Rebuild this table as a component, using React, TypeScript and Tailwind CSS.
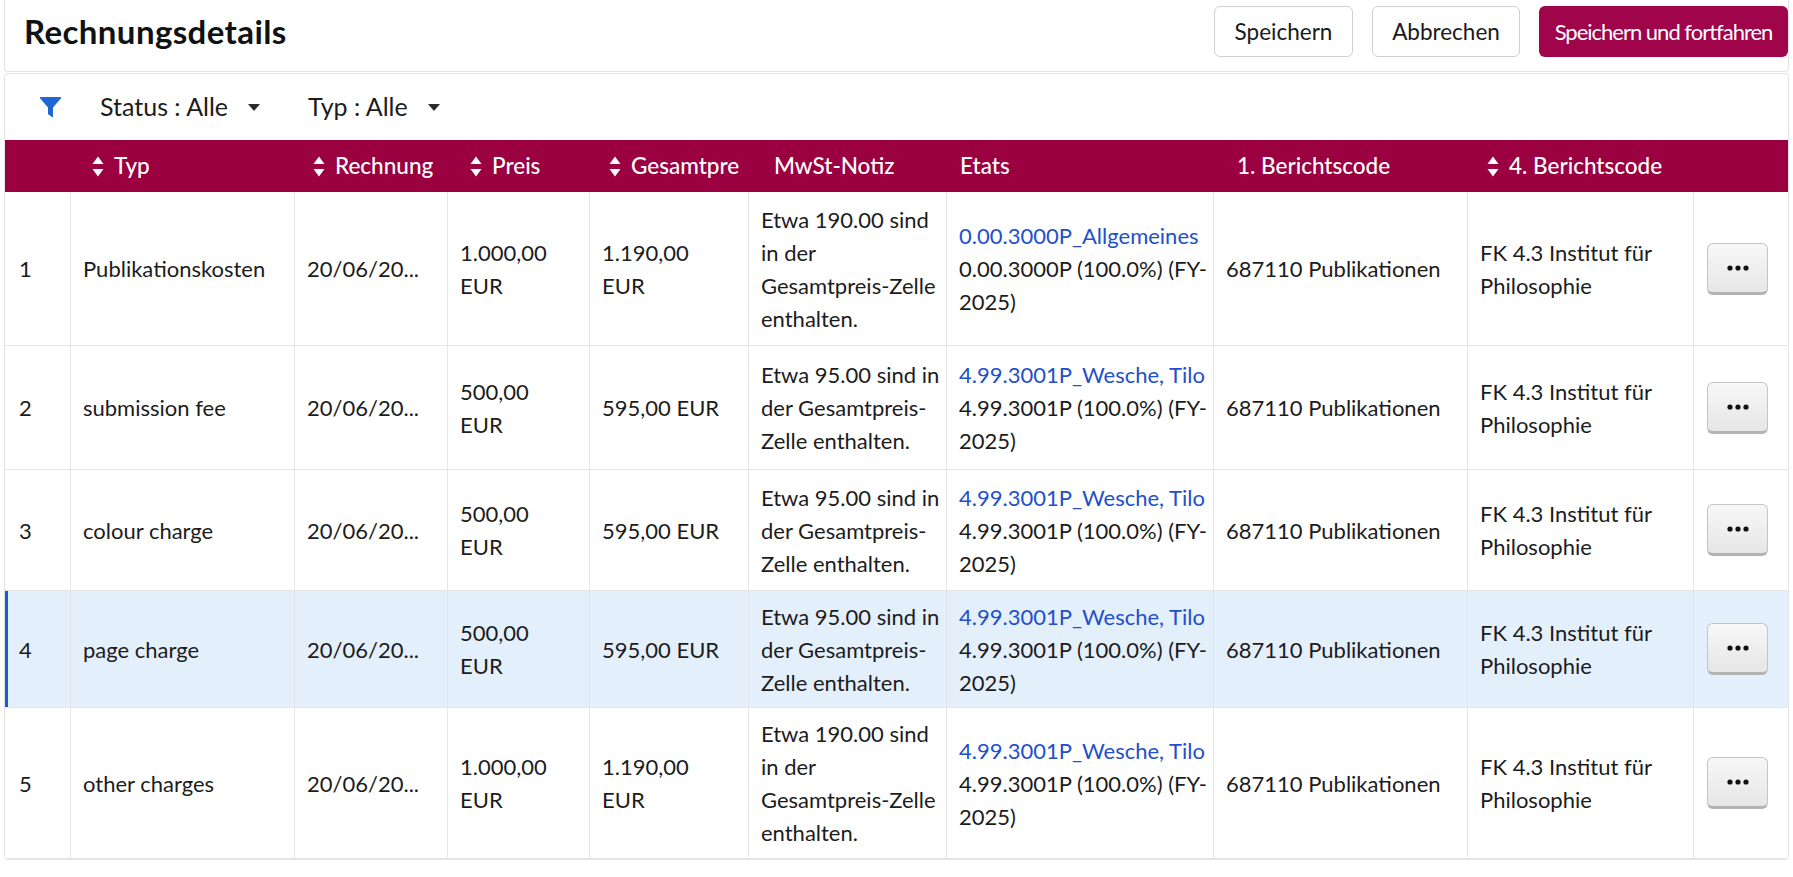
import React from "react";

type Row = {
  n: string;
  typ: string;
  preis: string[];
  gesamt: string[];
  note: string[];
  link: string;
  etat: string[];
  h: string;
  active?: boolean;
};

const rows: Row[] = [
  {
    n: "1",
    typ: "Publikationskosten",
    preis: ["1.000,00", "EUR"],
    gesamt: ["1.190,00", "EUR"],
    note: ["Etwa 190.00 sind", "in der", "Gesamtpreis-Zelle", "enthalten."],
    link: "0.00.3000P_Allgemeines",
    etat: ["0.00.3000P (100.0%) (FY-", "2025)"],
    h: "h-[154px]",
  },
  {
    n: "2",
    typ: "submission fee",
    preis: ["500,00", "EUR"],
    gesamt: ["595,00 EUR"],
    note: ["Etwa 95.00 sind in", "der Gesamtpreis-", "Zelle enthalten."],
    link: "4.99.3001P_Wesche, Tilo",
    etat: ["4.99.3001P (100.0%) (FY-", "2025)"],
    h: "h-[124px]",
  },
  {
    n: "3",
    typ: "colour charge",
    preis: ["500,00", "EUR"],
    gesamt: ["595,00 EUR"],
    note: ["Etwa 95.00 sind in", "der Gesamtpreis-", "Zelle enthalten."],
    link: "4.99.3001P_Wesche, Tilo",
    etat: ["4.99.3001P (100.0%) (FY-", "2025)"],
    h: "h-[121px]",
  },
  {
    n: "4",
    typ: "page charge",
    preis: ["500,00", "EUR"],
    gesamt: ["595,00 EUR"],
    note: ["Etwa 95.00 sind in", "der Gesamtpreis-", "Zelle enthalten."],
    link: "4.99.3001P_Wesche, Tilo",
    etat: ["4.99.3001P (100.0%) (FY-", "2025)"],
    h: "h-[117px]",
    active: true,
  },
  {
    n: "5",
    typ: "other charges",
    preis: ["1.000,00", "EUR"],
    gesamt: ["1.190,00", "EUR"],
    note: ["Etwa 190.00 sind", "in der", "Gesamtpreis-Zelle", "enthalten."],
    link: "4.99.3001P_Wesche, Tilo",
    etat: ["4.99.3001P (100.0%) (FY-", "2025)"],
    h: "h-[151px]",
  },
];

const SortIcon = () => (
  <svg width="12" height="21" viewBox="0 0 12 21" className="shrink-0">
    <path d="M6 0.5 L11.5 8 L0.5 8 Z" fill="white" />
    <path d="M0.5 13 L11.5 13 L6 20.5 Z" fill="white" />
  </svg>
);

const Caret = () => (
  <svg width="12" height="7" viewBox="0 0 12 7">
    <path d="M0 0 H12 L6 7 Z" fill="#2b2b2b" />
  </svg>
);

const Funnel = () => (
  <svg width="23" height="22" viewBox="0 0 23 22">
    <path
      d="M1.5 1 H21.5 Q22.8 1 22 2.2 L14 11.5 V20.5 Q14 21.5 13 21 L9.5 18.6 Q9 18.2 9 17.5 V11.5 L1 2.2 Q0.2 1 1.5 1 Z"
      fill="#1f68d3"
    />
  </svg>
);

const Dots = () => (
  <svg width="22" height="6" viewBox="0 0 22 6">
    <circle cx="3" cy="3" r="2.6" fill="#111" />
    <circle cx="11" cy="3" r="2.6" fill="#111" />
    <circle cx="19" cy="3" r="2.6" fill="#111" />
  </svg>
);

const cols =
  "grid grid-cols-[66px_224px_153px_142px_159px_198px_267px_254px_226px_94px]";

const Lines = ({ lines }: { lines: string[] }) => (
  <div>
    {lines.map((l, i) => (
      <div key={i} className="whitespace-nowrap">
        {l}
      </div>
    ))}
  </div>
);

export default function App() {
  const cell =
    "flex items-center border-r border-b border-[#e6e6e6] pl-3 pr-1 overflow-hidden";
  return (
    <div className="w-[1793px] h-[877px] overflow-hidden bg-white font-['Lato','Noto_Sans',sans-serif] text-[#1c1c1c]">
      {/* Header card */}
      <div className="mx-[4px] h-[72px] border-x border-b border-[#e3e3e3] rounded-b-[4px] flex justify-between items-start pt-[6px]">
        <h1 className="pl-[19px] h-[51px] flex items-center text-[33px] font-bold text-[#111] tracking-[0.4px]">
          Rechnungsdetails
        </h1>
        <div className="flex gap-[19px]">
          <button className="w-[139px] h-[51px] rounded-[6px] border border-[#cfcfcf] bg-white text-[22.5px] text-[#1a1a1a]">
            Speichern
          </button>
          <button className="w-[148px] h-[51px] rounded-[6px] border border-[#cfcfcf] bg-white text-[22.5px] text-[#1a1a1a]">
            Abbrechen
          </button>
          <button className="w-[249px] h-[51px] rounded-[6px] bg-[#a0044a] text-[22px] text-white tracking-[-1px] whitespace-nowrap">
            Speichern und fortfahren
          </button>
        </div>
      </div>

      {/* Content card */}
      <div className="mx-[4px] mt-[1px] border border-[#e3e3e3] rounded-[4px] overflow-hidden">
        <div className="h-[66px] flex items-center pl-[34px] text-[25px] text-[#1c1c1c]">
          <Funnel />
          <div className="ml-[38px] flex items-center">
            <span>Status : Alle</span>
            <span className="ml-[20px] flex items-center">
              <Caret />
            </span>
          </div>
          <div className="ml-[48px] flex items-center">
            <span>Typ : Alle</span>
            <span className="ml-[20px] flex items-center">
              <Caret />
            </span>
          </div>
        </div>

        {/* Table header */}
        <div className={`${cols} h-[52px] bg-[#9b0041] text-white text-[22.5px] font-medium`}>
          <div />
          <div className="flex items-center gap-[10px] pl-[21px]">
            <SortIcon />
            <span>Typ</span>
          </div>
          <div className="flex items-center gap-[10px] pl-[18px]">
            <SortIcon />
            <span>Rechnung</span>
          </div>
          <div className="flex items-center gap-[10px] pl-[22px]">
            <SortIcon />
            <span>Preis</span>
          </div>
          <div className="flex items-center gap-[10px] pl-[19px] overflow-hidden whitespace-nowrap">
            <SortIcon />
            <span>Gesamtpre</span>
          </div>
          <div className="flex items-center pl-[25px]">MwSt-Notiz</div>
          <div className="flex items-center pl-[13px]">Etats</div>
          <div className="flex items-center pl-[23px]">1. Berichtscode</div>
          <div className="flex items-center gap-[10px] pl-[19px] whitespace-nowrap">
            <SortIcon />
            <span>4. Berichtscode</span>
          </div>
          <div />
        </div>

        {/* Rows */}
        {rows.map((r) => (
          <div
            key={r.n}
            className={`${cols} ${r.h} text-[22px] leading-[33px] ${
              r.active ? "bg-[#e4effc]" : "bg-white"
            }`}
          >
            <div
              className={`${cell} pl-[14px] ${
                r.active ? "shadow-[inset_3px_0_0_#1a5ccc]" : ""
              }`}
            >
              {r.n}
            </div>
            <div className={cell}>{r.typ}</div>
            <div className={cell}>20/06/20...</div>
            <div className={cell}>
              <Lines lines={r.preis} />
            </div>
            <div className={cell}>
              <Lines lines={r.gesamt} />
            </div>
            <div className={cell}>
              <Lines lines={r.note} />
            </div>
            <div className={cell}>
              <div>
                <div className="whitespace-nowrap text-[#2150c9]">{r.link}</div>
                <Lines lines={r.etat} />
              </div>
            </div>
            <div className={`${cell} whitespace-nowrap`}>687110 Publikationen</div>
            <div className={cell}>
              <Lines lines={["FK 4.3 Institut für", "Philosophie"]} />
            </div>
            <div className="flex items-center border-b border-[#e6e6e6] pl-[13px]">
              <button className="w-[61px] h-[52px] rounded-[6px] border border-[#c4c4c4] border-b-[3px] border-b-[#b3b3b3] bg-gradient-to-b from-[#f7f7f7] to-[#e6e6e6] flex items-center justify-center">
                <Dots />
              </button>
            </div>
          </div>
        ))}
      </div>
    </div>
  );
}
